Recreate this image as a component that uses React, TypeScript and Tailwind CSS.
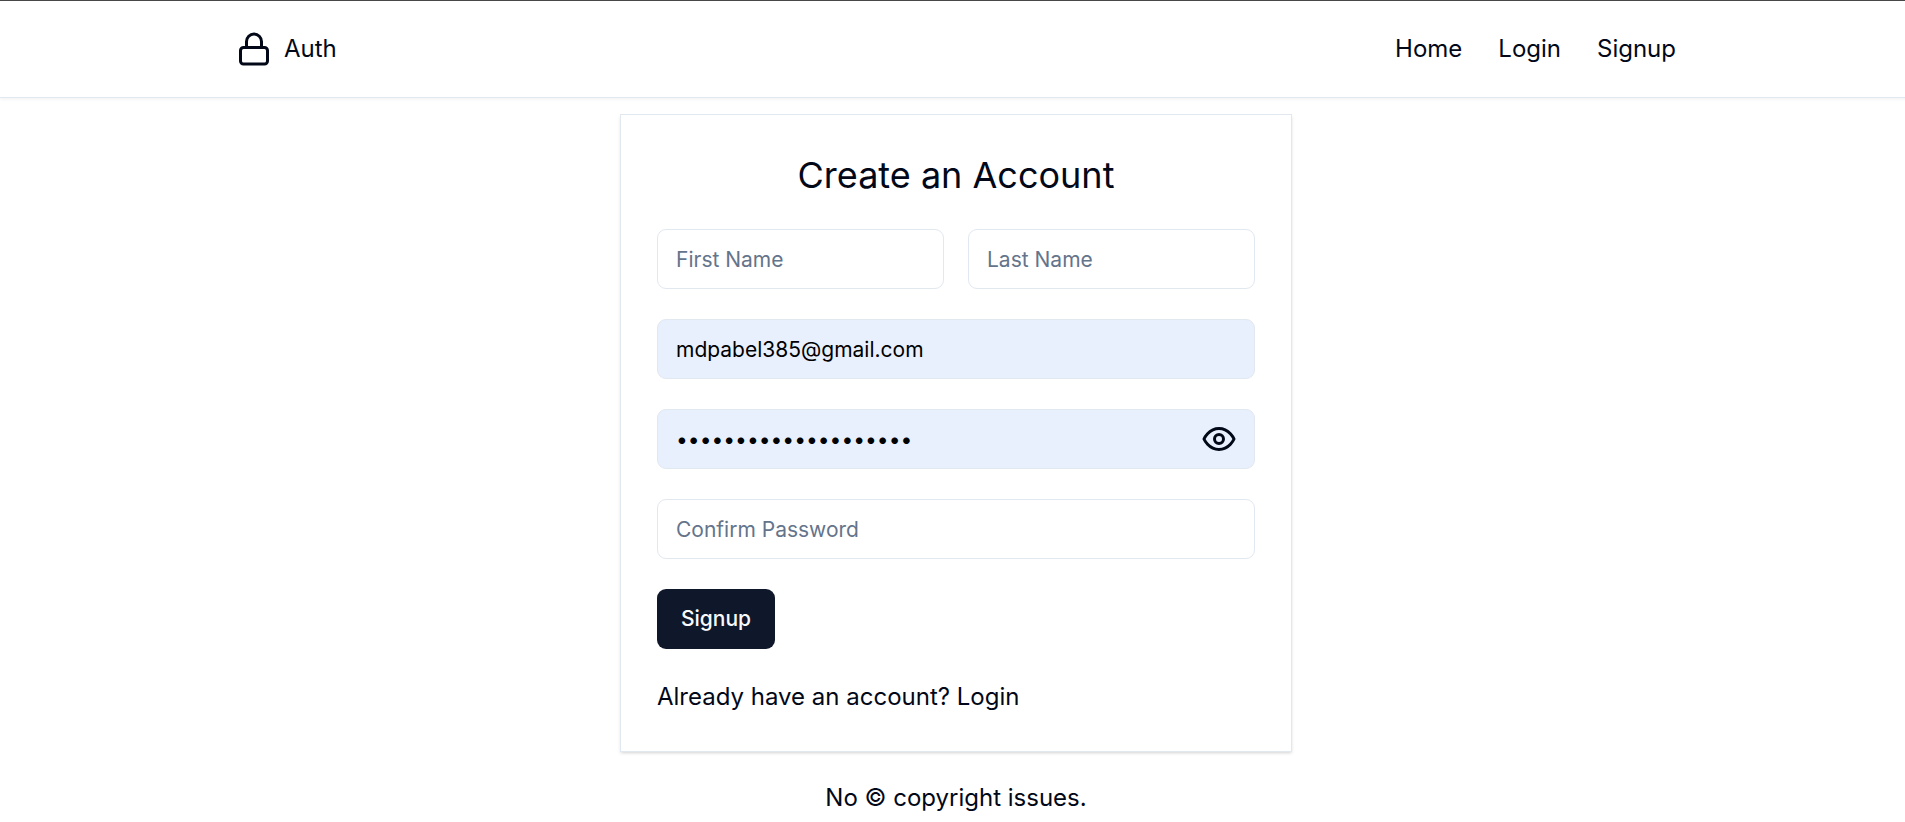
import React from "react";

const field =
  "h-[60px] w-full rounded-[9px] border border-[#e2e8f0] px-[18px] text-[21px] leading-[30px] outline-none placeholder:text-[#64748b]";

function LockIcon() {
  return (
    <svg width="36" height="36" viewBox="0 0 24 24" fill="none" stroke="currentColor" strokeWidth="2" strokeLinecap="round" strokeLinejoin="round">
      <rect width="18" height="11" x="3" y="11" rx="2" ry="2" />
      <path d="M7 11V7a5 5 0 0 1 10 0v4" />
    </svg>
  );
}

function EyeIcon() {
  return (
    <svg width="36" height="36" viewBox="0 0 24 24" fill="none" stroke="currentColor" strokeWidth="2" strokeLinecap="round" strokeLinejoin="round">
      <path d="M2 12s3-7 10-7 10 7 10 7-3 7-10 7-10-7-10-7Z" />
      <circle cx="12" cy="12" r="3" />
    </svg>
  );
}

export default function App() {
  return (
    <div className="h-[822px] w-full overflow-hidden bg-white font-['Inter',sans-serif] text-[24px] leading-[36px] text-[#020817]">
      <div className="w-[1912px]">
        <header className="border-t border-b border-t-[#474747] border-b-[#e2e8f0] shadow-[0_1.5px_3px_0_rgba(0,0,0,0.05)]">
          <div className="mx-auto flex h-24 w-[1440px] items-center justify-between">
            <a className="flex items-center gap-3">
              <LockIcon />
              <span>Auth</span>
            </a>
            <nav className="flex gap-9">
              <a>Home</a>
              <a>Login</a>
              <a>Signup</a>
            </nav>
          </div>
        </header>
        <main className="mx-auto mt-4 w-[672px] border border-[#e2e8f0] p-9 shadow-[0_1.5px_3px_0_rgba(0,0,0,0.1),0_1.5px_3px_-1.5px_rgba(0,0,0,0.1)]">
          <h1 className="text-center text-[36px] leading-[48px]">Create an Account</h1>
          <form className="mt-[30px] flex flex-col gap-[30px]" onSubmit={(e) => e.preventDefault()}>
            <div className="grid grid-cols-2 gap-6">
              <input className={field} placeholder="First Name" />
              <input className={field} placeholder="Last Name" />
            </div>
            <input className={`${field} bg-[#e8f0fe] text-black`} defaultValue="mdpabel385@gmail.com" />
            <div className="relative">
              <input type="password" className={`${field} block bg-[#e8f0fe] text-black`} defaultValue="abcdefghijklmnopqrst" />
              <button type="button" className="absolute top-3 right-[18px]">
                <EyeIcon />
              </button>
            </div>
            <input className={field} placeholder="Confirm Password" />
            <button className="h-[60px] w-[118px] rounded-[9px] bg-[#0f172a] text-[21px] leading-[30px] font-medium text-[#f8fafc]">
              Signup
            </button>
          </form>
          <p className="mt-[30px]">Already have an account? Login</p>
        </main>
        <footer className="mt-[28px] text-center">No © copyright issues.</footer>
      </div>
    </div>
  );
}
